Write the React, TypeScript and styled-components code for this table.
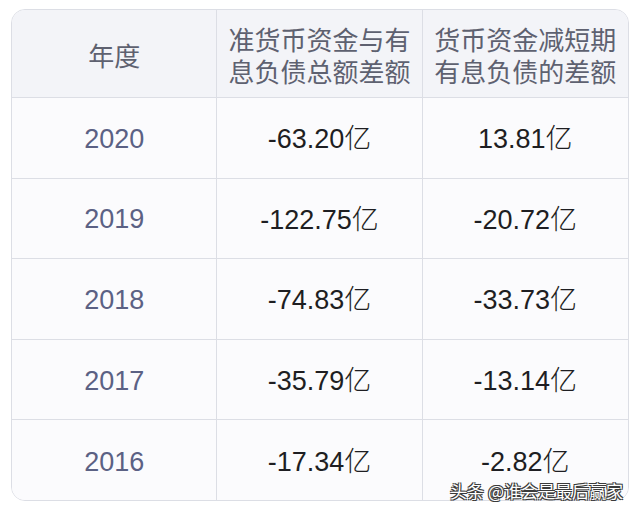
import React from "react";
import styled, { createGlobalStyle } from "styled-components";

const Global = createGlobalStyle`
  html, body { margin: 0; padding: 0; background: #ffffff; }
  body { font-family: "Liberation Sans", "Noto Sans CJK SC", sans-serif; }
`;

const Page = styled.div`
  position: relative;
  width: 640px;
  height: 515px;
  padding: 9px 11px 0 11px;
  box-sizing: border-box;
`;

const Table = styled.div`
  display: grid;
  grid-template-columns: repeat(3, 1fr);
  grid-template-rows: 88px repeat(5, 80.6px);
  border: 1px solid #dcdee5;
  border-radius: 14px;
  overflow: hidden;
  background: #fbfbfd;
  box-sizing: border-box;
  height: 492px;
`;

const Cell = styled.div<{ $head?: boolean; $last?: boolean; $lastRow?: boolean }>`
  display: flex;
  align-items: center;
  justify-content: center;
  text-align: center;
  background: ${(p) => (p.$head ? "#f3f4f8" : "#fbfbfd")};
  border-right: ${(p) => (p.$last ? "none" : "1px solid #dcdee5")};
  border-bottom: ${(p) => (p.$lastRow ? "none" : "1px solid #dcdee5")};
`;

const HeadText = styled.div`
  display: flex;
  flex-direction: column;
  font-family: "Noto Sans CJK SC", sans-serif;
  font-size: 26px;
  color: #5e6170;
  padding-top: 2px;
`;

const HeadLine = styled.span`
  display: block;
  height: 32px;
  line-height: 32px;
  overflow: visible;
`;

const Year = styled.span`
  font-family: "Liberation Sans", sans-serif;
  font-size: 27px;
  color: #5b6184;
  padding-top: 3px;
`;

const Value = styled.span`
  font-family: "Liberation Sans", "Noto Sans CJK SC", sans-serif;
  font-size: 27px;
  color: #1e1e22;
  padding-bottom: 2px;
`;

const Unit = styled.span`
  font-family: "Noto Sans CJK SC", sans-serif;
  font-weight: 300;
`;

const Watermark = styled.div`
  position: absolute;
  right: 17px;
  bottom: 14px;
  font-family: "Noto Sans CJK SC", sans-serif;
  font-size: 17px;
  line-height: 20px;
  color: #ffffff;
  text-shadow: -1px -1px 0 #3a3a3a, 1px -1px 0 #3a3a3a, -1px 1px 0 #3a3a3a, 1px 1px 0 #3a3a3a;
`;

const rows = [
  ["2020", "-63.20", "13.81"],
  ["2019", "-122.75", "-20.72"],
  ["2018", "-74.83", "-33.73"],
  ["2017", "-35.79", "-13.14"],
  ["2016", "-17.34", "-2.82"],
];

export default function App() {
  return (
    <>
      <Global />
      <Page>
        <Table>
          <Cell $head>
            <HeadText>
              <HeadLine>年度</HeadLine>
            </HeadText>
          </Cell>
          <Cell $head>
            <HeadText>
              <HeadLine>准货币资金与有</HeadLine>
              <HeadLine>息负债总额差额</HeadLine>
            </HeadText>
          </Cell>
          <Cell $head $last>
            <HeadText>
              <HeadLine>货币资金减短期</HeadLine>
              <HeadLine>有息负债的差额</HeadLine>
            </HeadText>
          </Cell>
          {rows.map((r, i) => {
            const lastRow = i === rows.length - 1;
            return (
              <React.Fragment key={r[0]}>
                <Cell $lastRow={lastRow}>
                  <Year>{r[0]}</Year>
                </Cell>
                <Cell $lastRow={lastRow}>
                  <Value>
                    {r[1]}
                    <Unit>亿</Unit>
                  </Value>
                </Cell>
                <Cell $lastRow={lastRow} $last>
                  <Value>
                    {r[2]}
                    <Unit>亿</Unit>
                  </Value>
                </Cell>
              </React.Fragment>
            );
          })}
        </Table>
        <Watermark>头条 @谁会是最后赢家</Watermark>
      </Page>
    </>
  );
}
